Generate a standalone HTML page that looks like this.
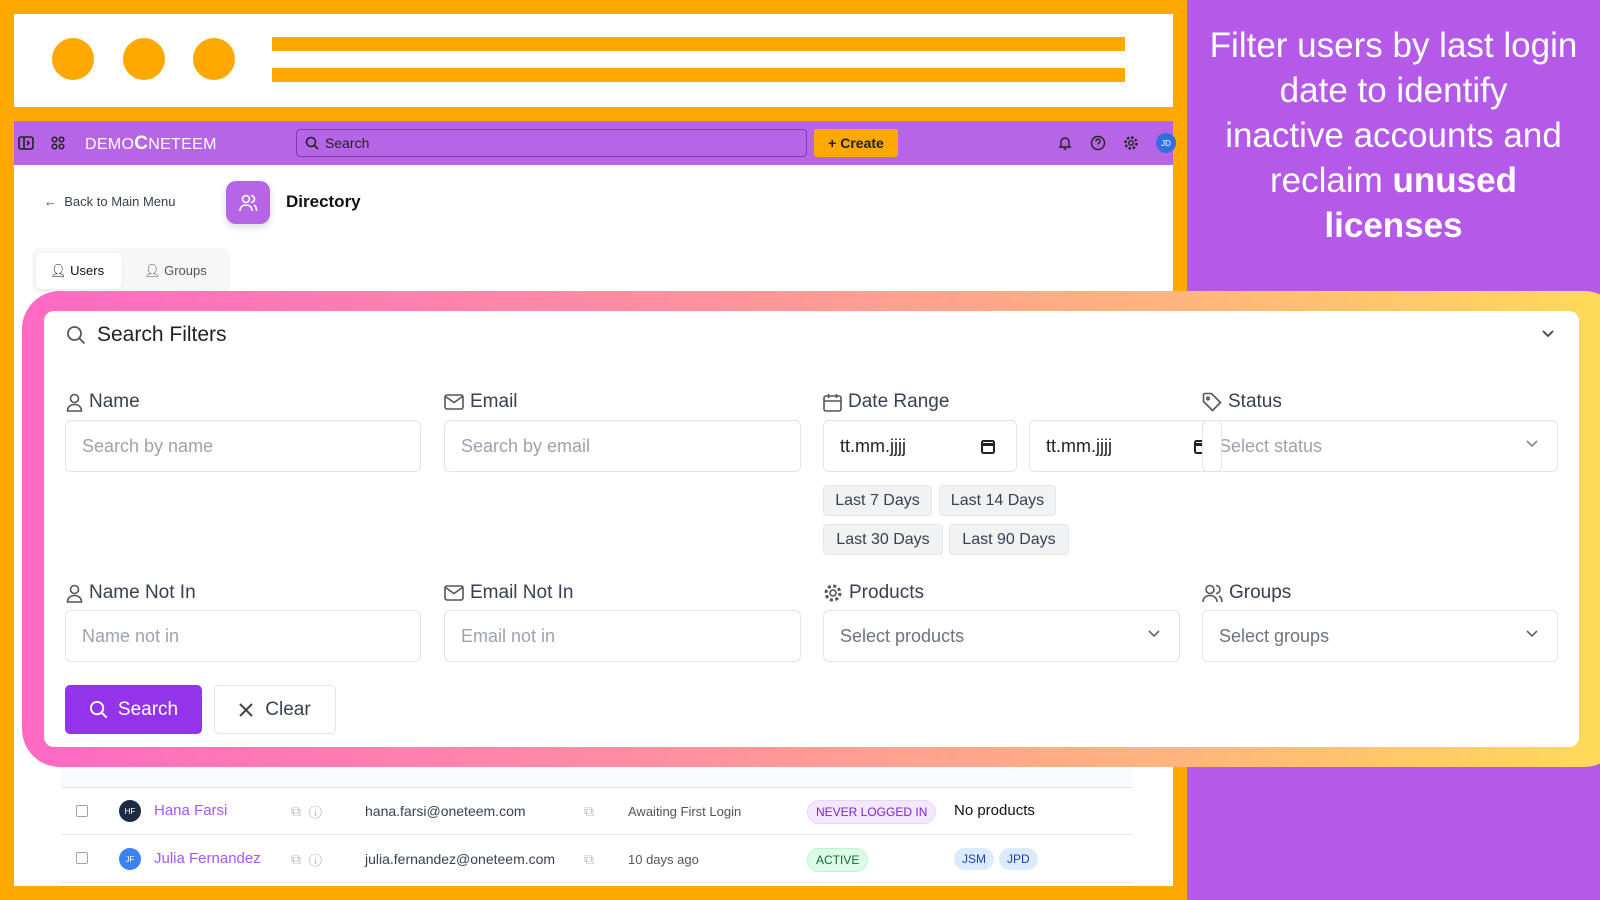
<!DOCTYPE html>
<html><head><meta charset="utf-8"><style>
*{box-sizing:border-box;margin:0;padding:0}
body{width:1600px;height:900px;overflow:hidden;background:#ffa800;font-family:"Liberation Sans",sans-serif;position:relative;color:#1f2937}
.abs{position:absolute}
.dot{position:absolute;width:42px;height:42px;border-radius:50%;background:#ffa800;top:38px}
.bar{position:absolute;left:272px;width:853px;height:14px;background:#ffa800}
.nav{left:14px;top:121px;width:1159px;height:44px;background:#b565e6}
.content{left:14px;top:165px;width:1159px;height:721px;background:#fff}
.right{left:1187px;top:0;width:413px;height:900px;background:#b55ae8;color:#fff;text-align:center;font-size:35px;line-height:45px;padding-top:23px}
.card{left:22px;top:291px;width:1600px;height:476px;border-radius:38px;background:linear-gradient(90deg,#ff69c4,#ff8fa0 40%,#ffb87a 75%,#ffdc55)}
.inner{left:44px;top:311px;width:1535px;height:436px;border-radius:10px;background:#fff}
.lbl{position:absolute;font-size:19px;color:#374151;display:flex;align-items:center;gap:6px}
.inp{position:absolute;height:52px;border:1.5px solid #e2e4e8;border-radius:6px;font-size:18px;color:#9ca3af;display:flex;align-items:center;padding-left:16px;background:#fff}
.qb{position:absolute;height:31px;background:#f1f2f4;border:1px solid #e5e7eb;border-radius:4px;font-size:16px;color:#374151;display:flex;align-items:center;justify-content:center}
.chev{position:absolute;right:18px;top:18px}
.row{position:absolute;left:61px;width:1072px;font-size:14px;color:#374151}
.pill{display:inline-block;padding:4px 8px;border-radius:12px;font-size:12px}
svg{display:block}
</style></head><body>
<div class="abs" style="left:14px;top:14px;width:1159px;height:93px;background:#fff"></div>
<div class="dot" style="left:52px"></div><div class="dot" style="left:123px"></div><div class="dot" style="left:193px"></div>
<div class="bar" style="top:37px"></div><div class="bar" style="top:68px"></div>

<div class="abs nav"></div>
<svg class="abs" style="left:18px;top:136px" width="16" height="14" viewBox="0 0 16 14" fill="none" stroke="#222" stroke-width="1.6"><rect x="1" y="1" width="14" height="12" rx="2"/><path d="M6 1v12M9 5l2 2-2 2"/></svg>
<svg class="abs" style="left:51px;top:136px" width="14" height="14" viewBox="0 0 14 14" fill="none" stroke="#222" stroke-width="1.5"><circle cx="3.5" cy="3.5" r="2.3"/><circle cx="10.5" cy="3.5" r="2.3"/><circle cx="3.5" cy="10.5" r="2.3"/><circle cx="10.5" cy="10.5" r="2.3"/></svg>
<div class="abs" style="left:85px;top:133px;color:#fff;font-size:16px;letter-spacing:0.3px">DEMO<b style="font-size:19px">C</b>NETEEM</div>
<div class="abs" style="left:296px;top:129px;width:511px;height:28px;border:1.5px solid #7a3fa6;border-radius:4px;background:#b565e6;font-size:14px;color:#222;display:flex;align-items:center;padding-left:8px;gap:6px"><svg width="14" height="14" viewBox="0 0 14 14" fill="none" stroke="#222" stroke-width="1.6"><circle cx="6" cy="6" r="4.5"/><path d="M9.5 9.5L13 13"/></svg>Search</div>
<div class="abs" style="left:814px;top:129px;width:84px;height:28px;background:#ffa800;border-radius:3px;font-size:14px;font-weight:bold;color:#222;display:flex;align-items:center;justify-content:center">+ Create</div>
<svg class="abs" style="left:1057px;top:135px" width="16" height="16" viewBox="0 0 16 16" fill="none" stroke="#222" stroke-width="1.4"><path d="M4 11V7a4 4 0 018 0v4l1 1H3zM6.5 14h3"/></svg>
<svg class="abs" style="left:1090px;top:135px" width="16" height="16" viewBox="0 0 16 16" fill="none" stroke="#222" stroke-width="1.4"><circle cx="8" cy="8" r="6.5"/><path d="M6 6.3a2 2 0 113 1.6c-.7.4-1 .8-1 1.6M8 11.5v.3"/></svg>
<svg class="abs" style="left:1123px;top:135px" width="16" height="16" viewBox="0 0 16 16" fill="none" stroke="#222" stroke-width="1.4"><circle cx="8" cy="8" r="2.3"/><circle cx="8" cy="8" r="5.5" stroke-dasharray="2.5 1.8" stroke-width="2.4"/></svg>
<div class="abs" style="left:1156px;top:133px;width:20px;height:20px;border-radius:50%;background:#2f6fe0;color:#fff;font-size:8px;display:flex;align-items:center;justify-content:center">JD</div>

<div class="abs content"></div>
<div class="abs" style="left:44px;top:194px;font-size:13px;color:#374151">←&nbsp; Back to Main Menu</div>
<div class="abs" style="left:226px;top:181px;width:44px;height:43px;border-radius:10px;background:#b565e6;box-shadow:0 3px 8px rgba(0,0,0,.15);display:flex;align-items:center;justify-content:center"><svg width="22" height="22" viewBox="0 0 22 22" fill="none" stroke="#fff" stroke-width="1.6"><circle cx="9" cy="7" r="3.5"/><path d="M3 19c0-4 2.5-6 6-6s6 2 6 6M14 3.5a3.5 3.5 0 010 7M17 13c1.5.8 2.5 3 2.5 6"/></svg></div>
<div class="abs" style="left:286px;top:192px;font-size:17px;font-weight:bold;color:#111">Directory</div>
<div class="abs" style="left:32px;top:248px;width:198px;height:45px;background:#f7f7f8;border-radius:8px"></div>
<div class="abs" style="left:36px;top:253px;width:86px;height:36px;background:#fff;border-radius:6px;box-shadow:0 1px 3px rgba(0,0,0,.08)"></div>
<div class="abs" style="left:50px;top:263px;font-size:13px;color:#111">👤︎ Users</div>
<div class="abs" style="left:144px;top:263px;font-size:13px;color:#555">👤︎ Groups</div>

<!-- table -->
<div class="abs" style="left:61px;top:755px;width:1072px;height:33px;background:#f9fafb;border-bottom:1px solid #e5e7eb"></div>
<div class="row" style="top:788px;height:47px;border-bottom:1px solid #e5e7eb">
 <div class="abs" style="left:15px;top:17px;width:12px;height:12px;border:1.5px solid #9ca3af;border-radius:2px"></div>
 <div class="abs" style="left:58px;top:12px;width:22px;height:22px;border-radius:50%;background:#1e2a44;color:#fff;font-size:8px;display:flex;align-items:center;justify-content:center">HF</div>
 <div class="abs" style="left:93px;top:14px;font-size:15px;color:#a855f7">Hana Farsi</div>
 <div class="abs" style="left:230px;top:15px;color:#bbb">⧉ &nbsp;ⓘ</div>
 <div class="abs" style="left:304px;top:15px">hana.farsi@oneteem.com</div>
 <div class="abs" style="left:523px;top:15px;color:#bbb">⧉</div>
 <div class="abs" style="left:567px;top:16px;font-size:13px;color:#555">Awaiting First Login</div>
 <div class="abs pill" style="left:746px;top:12px;background:#f3e8ff;border:1px solid #e9d5ff;color:#7e22ce">NEVER LOGGED IN</div>
 <div class="abs" style="left:893px;top:14px;font-size:15px;color:#111">No products</div>
</div>
<div class="row" style="top:835px;height:48px;border-bottom:1px solid #e5e7eb">
 <div class="abs" style="left:15px;top:17px;width:12px;height:12px;border:1.5px solid #9ca3af;border-radius:2px"></div>
 <div class="abs" style="left:58px;top:13px;width:22px;height:22px;border-radius:50%;background:#3b82f6;color:#fff;font-size:8px;display:flex;align-items:center;justify-content:center">JF</div>
 <div class="abs" style="left:93px;top:15px;font-size:15px;color:#a855f7">Julia Fernandez</div>
 <div class="abs" style="left:230px;top:16px;color:#bbb">⧉ &nbsp;ⓘ</div>
 <div class="abs" style="left:304px;top:16px">julia.fernandez@oneteem.com</div>
 <div class="abs" style="left:523px;top:16px;color:#bbb">⧉</div>
 <div class="abs" style="left:567px;top:17px;font-size:13px;color:#555">10 days ago</div>
 <div class="abs pill" style="left:746px;top:13px;background:#dcfce7;border:1px solid #bbf7d0;color:#166534">ACTIVE</div>
 <div class="abs pill" style="left:893px;top:13px;background:#dbeafe;color:#1e40af">JSM</div>
 <div class="abs pill" style="left:938px;top:13px;background:#dbeafe;color:#1e40af">JPD</div>
</div>

<div class="abs right">Filter users by last login<br>date to identify<br>inactive accounts and<br>reclaim <b>unused</b><br><b>licenses</b></div>

<div class="abs card"></div>
<div class="abs inner"></div>
<svg class="abs" style="left:66px;top:325px" width="20" height="20" viewBox="0 0 20 20" fill="none" stroke="#555" stroke-width="1.8"><circle cx="8.5" cy="8.5" r="6.5"/><path d="M13.5 13.5L18.5 18.5"/></svg>
<div class="abs" style="left:97px;top:323px;font-size:21px;color:#222">Search Filters</div>
<svg class="abs" style="left:1541px;top:329px" width="14" height="10" viewBox="0 0 14 10" fill="none" stroke="#444" stroke-width="1.8"><path d="M2 2l5 5 5-5"/></svg>

<div class="lbl" style="left:66px;top:391px"><svg width="17" height="19" viewBox="0 0 17 19" fill="none" stroke="#555" stroke-width="1.6"><circle cx="8.5" cy="5.5" r="4"/><path d="M1.5 18c0-4 3-6.5 7-6.5s7 2.5 7 6.5z"/></svg>Name</div>
<div class="inp" style="left:65px;top:420px;width:356px">Search by name</div>
<div class="lbl" style="left:444px;top:391px"><svg width="20" height="16" viewBox="0 0 20 16" fill="none" stroke="#555" stroke-width="1.6"><rect x="1" y="1" width="18" height="14" rx="2"/><path d="M1.5 2.5l8.5 6 8.5-6"/></svg>Email</div>
<div class="inp" style="left:444px;top:420px;width:357px">Search by email</div>
<div class="lbl" style="left:823px;top:391px"><svg width="19" height="19" viewBox="0 0 19 19" fill="none" stroke="#555" stroke-width="1.6"><rect x="1" y="3" width="17" height="15" rx="2"/><path d="M1 8h17M5.5 1v4M13.5 1v4"/></svg>Date Range</div>
<div class="inp" style="left:823px;top:420px;width:194px;color:#222">tt.mm.jjjj<svg class="chev" style="top:17px;right:20px" width="16" height="17" viewBox="0 0 16 17" fill="none" stroke="#222" stroke-width="2"><rect x="2" y="3" width="12" height="12" rx="1.5"/><path d="M2 6.5h12" stroke-width="3"/></svg></div>
<div class="inp" style="left:1029px;top:420px;width:183px;color:#222">tt.mm.jjjj<svg class="chev" style="top:17px;right:2px" width="16" height="17" viewBox="0 0 16 17" fill="none" stroke="#222" stroke-width="2"><rect x="2" y="3" width="12" height="12" rx="1.5"/><path d="M2 6.5h12" stroke-width="3"/></svg></div>
<div class="lbl" style="left:1202px;top:391px"><svg width="20" height="20" viewBox="0 0 20 20" fill="none" stroke="#555" stroke-width="1.6"><path d="M1.5 2.5v7l9 9 8-8-9-9h-7z"/><circle cx="6" cy="6.5" r="1.3"/></svg>Status</div>
<div class="inp" style="left:1202px;top:420px;width:356px;padding-left:16px">Select status<svg class="chev" width="14" height="10" viewBox="0 0 14 10" fill="none" stroke="#888" stroke-width="1.6"><path d="M2 2l5 5 5-5"/></svg></div>
<div class="abs" style="left:1202px;top:420px;width:20px;height:52px;border:1.5px solid #e2e4e8;border-radius:6px;background:#fff"></div>

<div class="qb" style="left:823px;top:485px;width:109px">Last 7 Days</div>
<div class="qb" style="left:939px;top:485px;width:117px">Last 14 Days</div>
<div class="qb" style="left:823px;top:524px;width:120px">Last 30 Days</div>
<div class="qb" style="left:949px;top:524px;width:120px">Last 90 Days</div>

<div class="lbl" style="left:66px;top:582px"><svg width="17" height="19" viewBox="0 0 17 19" fill="none" stroke="#555" stroke-width="1.6"><circle cx="8.5" cy="5.5" r="4"/><path d="M1.5 18c0-4 3-6.5 7-6.5s7 2.5 7 6.5z"/></svg>Name Not In</div>
<div class="inp" style="left:65px;top:610px;width:356px">Name not in</div>
<div class="lbl" style="left:444px;top:582px"><svg width="20" height="16" viewBox="0 0 20 16" fill="none" stroke="#555" stroke-width="1.6"><rect x="1" y="1" width="18" height="14" rx="2"/><path d="M1.5 2.5l8.5 6 8.5-6"/></svg>Email Not In</div>
<div class="inp" style="left:444px;top:610px;width:357px">Email not in</div>
<div class="lbl" style="left:823px;top:582px"><svg width="20" height="20" viewBox="0 0 20 20" fill="none" stroke="#555" stroke-width="1.6"><circle cx="10" cy="10" r="3"/><circle cx="10" cy="10" r="7" stroke-dasharray="3 2.5" stroke-width="3"/></svg>Products</div>
<div class="inp" style="left:823px;top:610px;width:357px;color:#6b7280">Select products<svg class="chev" width="14" height="10" viewBox="0 0 14 10" fill="none" stroke="#666" stroke-width="1.6"><path d="M2 2l5 5 5-5"/></svg></div>
<div class="lbl" style="left:1202px;top:582px"><svg width="21" height="19" viewBox="0 0 21 19" fill="none" stroke="#555" stroke-width="1.6"><circle cx="8" cy="5.5" r="4"/><path d="M1 18c0-4 3-6.5 7-6.5s7 2.5 7 6.5M14 1.5a4 4 0 010 8M17 12c2 1 3 3 3 6"/></svg>Groups</div>
<div class="inp" style="left:1202px;top:610px;width:356px;color:#6b7280">Select groups<svg class="chev" width="14" height="10" viewBox="0 0 14 10" fill="none" stroke="#666" stroke-width="1.6"><path d="M2 2l5 5 5-5"/></svg></div>

<div class="abs" style="left:65px;top:685px;width:137px;height:49px;background:#9333ea;border-radius:5px;color:#fff;font-size:19px;display:flex;align-items:center;justify-content:center;gap:10px"><svg width="19" height="19" viewBox="0 0 20 20" fill="none" stroke="#fff" stroke-width="2"><circle cx="8.5" cy="8.5" r="6.5"/><path d="M13.5 13.5L18.5 18.5"/></svg>Search</div>
<div class="abs" style="left:214px;top:685px;width:122px;height:49px;background:#fff;border:1.5px solid #e2e4e8;border-radius:5px;color:#374151;font-size:19px;display:flex;align-items:center;justify-content:center;gap:12px"><svg width="14" height="14" viewBox="0 0 14 14" fill="none" stroke="#444" stroke-width="2"><path d="M1 1l12 12M13 1L1 13"/></svg>Clear</div>
</body></html>
